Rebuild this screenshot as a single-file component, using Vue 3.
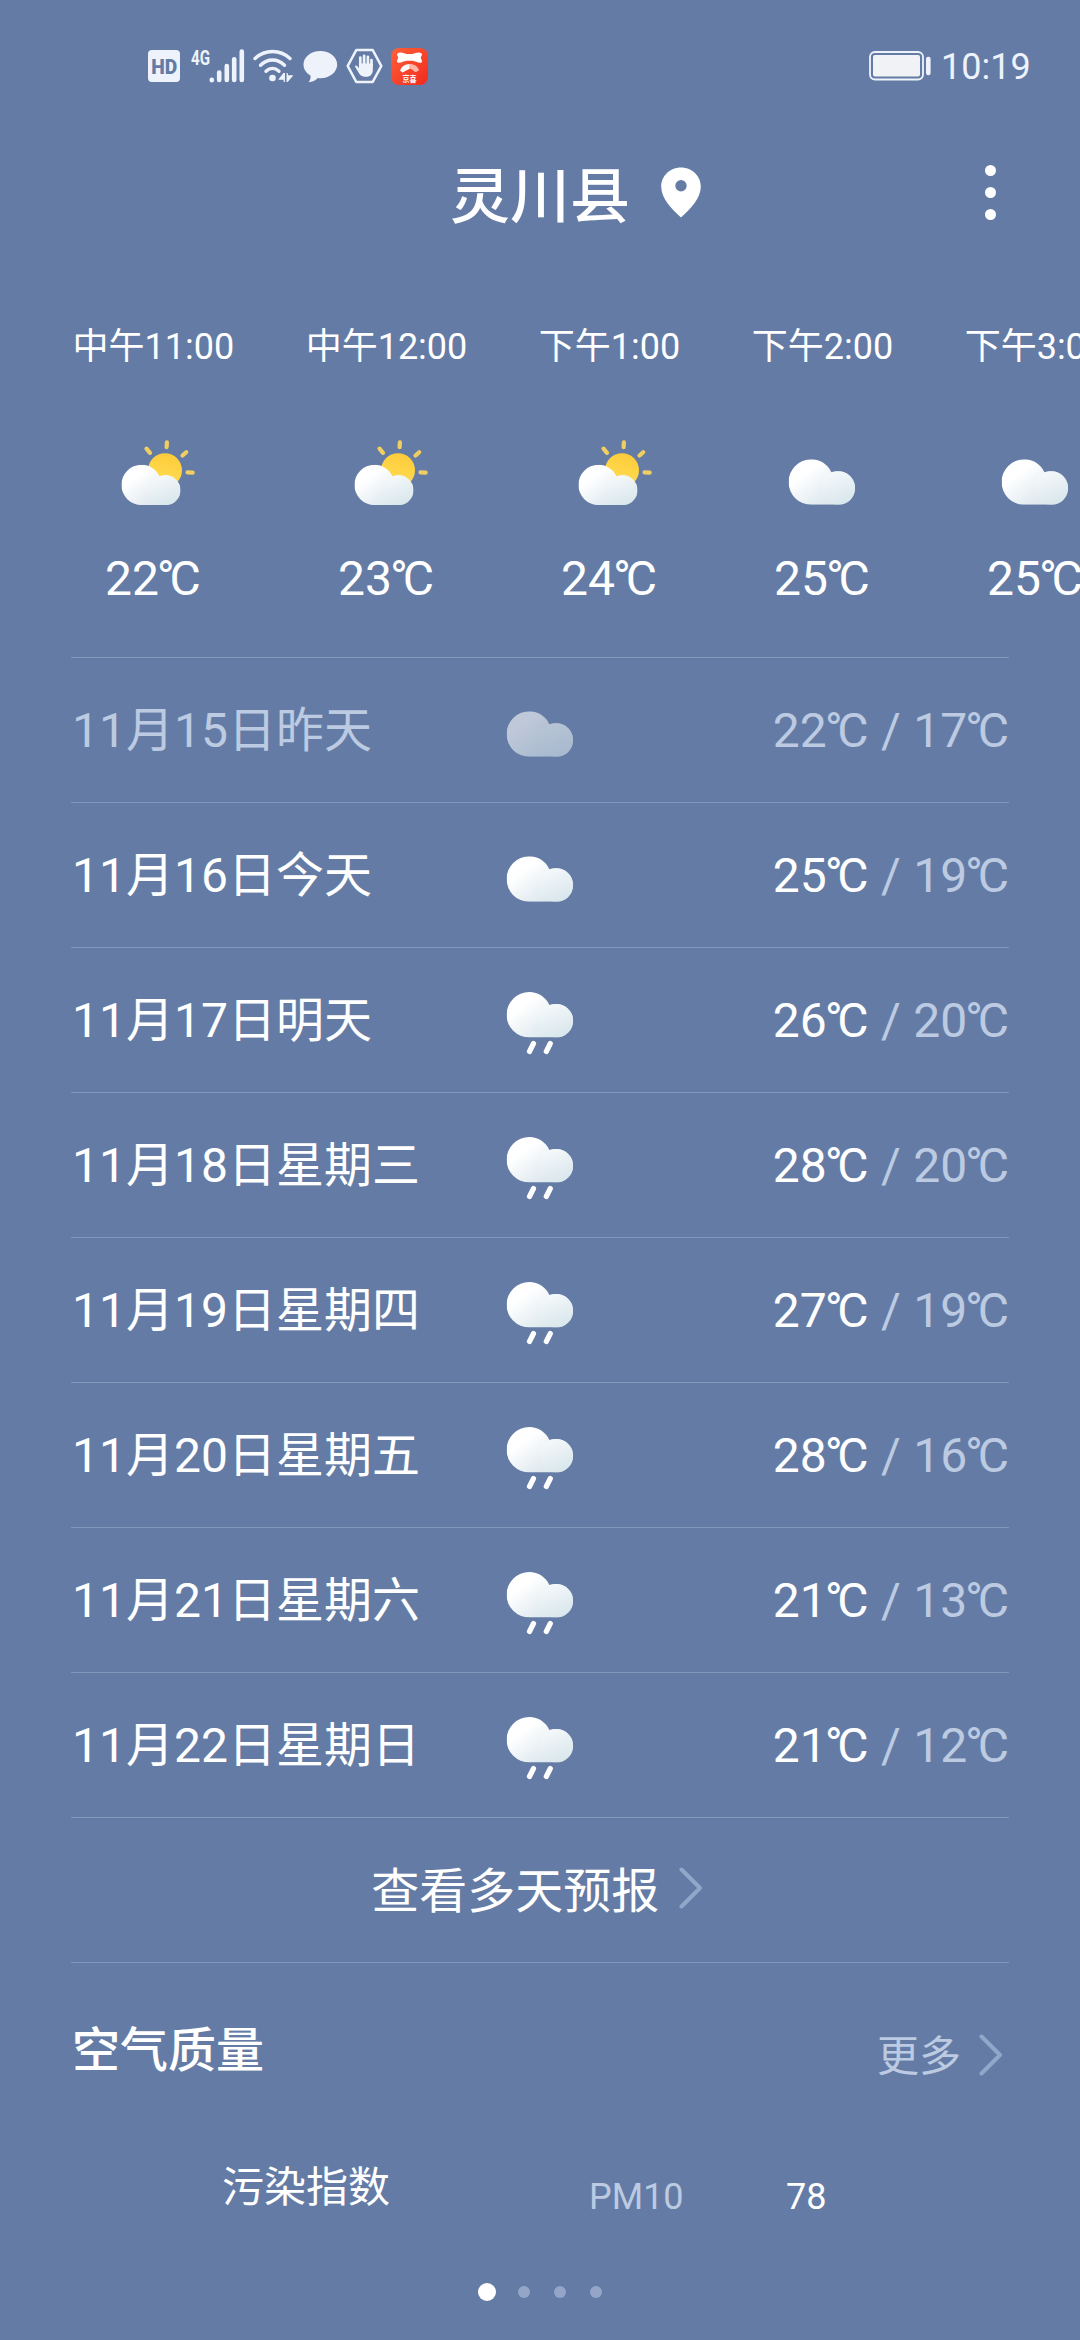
<script setup>
const hours = [
  { time: '中午11:00', icon: 'sun', temp: 22 },
  { time: '中午12:00', icon: 'sun', temp: 23 },
  { time: '下午1:00', icon: 'sun', temp: 24 },
  { time: '下午2:00', icon: 'cloud', temp: 25 },
  { time: '下午3:00', icon: 'cloud', temp: 25 },
]
const days = [
  { date: '11月15日', name: '昨天', icon: 'cloud', high: 22, low: 17, past: true },
  { date: '11月16日', name: '今天', icon: 'cloud', high: 25, low: 19 },
  { date: '11月17日', name: '明天', icon: 'rain', high: 26, low: 20 },
  { date: '11月18日', name: '星期三', icon: 'rain', high: 28, low: 20 },
  { date: '11月19日', name: '星期四', icon: 'rain', high: 27, low: 19 },
  { date: '11月20日', name: '星期五', icon: 'rain', high: 28, low: 16 },
  { date: '11月21日', name: '星期六', icon: 'rain', high: 21, low: 13 },
  { date: '11月22日', name: '星期日', icon: 'rain', high: 21, low: 12 },
]
</script>

<template>
  <div class="screen">
    <!-- shared icon shapes -->
    <svg class="defs" width="0" height="0" aria-hidden="true">
      <defs>
        <linearGradient id="cloudBody" x1="0.05" y1="0.2" x2="0.85" y2="0.95">
          <stop offset="0.2" stop-color="#ffffff" />
          <stop offset="0.65" stop-color="#e6eef2" />
          <stop offset="1" stop-color="#d6e5eb" />
        </linearGradient>
        <linearGradient id="cloudPuff" x1="0.3" y1="0" x2="0.6" y2="1">
          <stop offset="0" stop-color="#f7fafb" />
          <stop offset="1" stop-color="#d9e7ed" />
        </linearGradient>
        <linearGradient id="sunBody" x1="0.6" y1="0" x2="0.3" y2="1">
          <stop offset="0" stop-color="#fecb3a" />
          <stop offset="1" stop-color="#ffdf55" />
        </linearGradient>
        <symbol id="cloudShape" viewBox="0 0 66.5 45.5">
          <path fill="url(#cloudBody)" d="M22.6 0C31.6 0 39 5.100 42.700 12.900C44.600 12.300 47 12 49.700 12A16.750 16.750 0 0 1 49.700 45.500H22.600A22.700 22.700 0 0 1 22.600 0Z" />
          <path fill="url(#cloudPuff)" opacity="0.75" d="M33 28.700A16.700 16.700 0 0 1 49.700 12A16.750 16.750 0 0 1 49.700 45.500C40 45.500 33 40 33 28.700Z" />
        </symbol>
        <symbol id="icon-cloud" viewBox="0 0 96 96">
          <use href="#cloudShape" x="14.700" y="29.300" width="66.500" height="45.500" />
        </symbol>
        <symbol id="icon-rain" viewBox="0 0 96 96">
          <use href="#cloudShape" x="14.700" y="20" width="66.500" height="45.500" />
          <path d="M41.500 71.500L37.500 79.500M58.300 71.500L54.300 79.500" stroke="#fff" stroke-width="5.200" stroke-linecap="round" />
        </symbol>
        <symbol id="icon-sun" viewBox="0 0 96 96">
          <circle cx="60" cy="40.200" r="17" fill="url(#sunBody)" />
          <path d="M61.900 12.300L61.600 17.200M81.200 22.200L77.500 25.500M41.500 18.700L45 22.900M82.500 42.300L87.700 42.600" stroke="#f0ce62" stroke-width="4.200" stroke-linecap="round" />
          <use href="#cloudShape" x="16.500" y="34.700" width="59" height="40.400" />
        </symbol>
      </defs>
    </svg>

    <header class="status">
      <div class="status-left">
        <svg width="32" height="32" viewBox="0 0 32 32">
          <rect width="32" height="32" rx="4" fill="#eef3fb" />
          <text x="3.200" y="23.500" textLength="26" lengthAdjust="spacingAndGlyphs" class="hd">HD</text>
        </svg>
        <svg class="signal" width="54" height="36" viewBox="0 0 54 36">
          <text x="0" y="16.500" textLength="19" lengthAdjust="spacingAndGlyphs" class="net">4G</text>
          <path d="M20.800 32.300V31.800M28.200 32V24.500M35.800 32V18M43.200 32V11.200M50.800 32V3.500" stroke="#eef3fb" stroke-width="4.600" stroke-linecap="round" />
        </svg>
        <svg class="wifi" width="40" height="34" viewBox="0 0 40 34">
          <g fill="none" stroke="#eef3fb" stroke-width="3.400" stroke-linecap="round">
            <path d="M2 9.500C12 .200 27 .200 37 9.500" />
            <path d="M7.500 16.200C14.500 9.300 24.500 9.300 31.500 16.200" />
            <path d="M13 22.300C17 18.600 22 18.600 26 22.300" />
          </g>
          <circle cx="19.500" cy="29" r="3.300" fill="#eef3fb" />
          <path d="M31.300 24V33M31 24.500L26.500 30H31.500M34.200 33V24M34.200 32.500L39 27H34" fill="#eef3fb" stroke="#eef3fb" stroke-width="1.300" />
        </svg>
        <svg class="bubble" width="35" height="33" viewBox="0 0 35 33">
          <path fill="#eef3fb" d="M17.300 1C26.700 1 34.200 7 34.200 14.600C34.200 22.200 26.700 28.300 17.300 28.300C16.400 28.300 15.600 28.200 14.700 28.100C12.500 30.600 9.500 32 5.500 32.300C7 30.600 7.700 28.300 7.600 25.700C3.200 23.200 .500 19.200 .500 14.600C.500 7 8 1 17.300 1Z" />
        </svg>
        <svg class="hex" width="37" height="36" viewBox="0 0 37 36">
          <path d="M10.300 2H26.700L35.300 18L26.700 34H10.300L1.700 18Z" fill="none" stroke="#eef3fb" stroke-width="2.600" stroke-linejoin="round" />
          <path d="M14.300 17V9.500M18.100 17V7.800M21.900 17V8.800M25.500 18V12" stroke="#eef3fb" stroke-width="2.700" stroke-linecap="round" />
          <path fill="#eef3fb" d="M12.950 15.500H26.850V21.500C26.850 26 24.500 28.800 20.200 28.800C15.500 28.800 13.800 27 11.800 23.200L9.200 18.900C8.600 17.600 10.200 16.900 11.200 18.100L12.950 20.200Z" />
        </svg>
        <svg class="app" width="37" height="37" viewBox="0 0 37 37">
          <defs>
            <linearGradient id="appBg" x1="0" y1="0" x2="1" y2="1">
              <stop offset="0" stop-color="#ff6138" />
              <stop offset="1" stop-color="#f02a1e" />
            </linearGradient>
          </defs>
          <rect width="37" height="37" rx="8" fill="url(#appBg)" />
          <path fill="#fff" d="M6.500 5.500C9 3.300 12.500 5 15.500 6H21.500C24.500 5 28 3.300 30.500 5.500C32 7 29.800 8.300 29.800 9.500C29.800 11 32 13 30.500 14.500C27.500 15.600 24.500 13.200 21.500 12.800H15.500C12.500 13.200 9.500 15.600 6.500 14.500C5 13 7.200 11 7.200 9.500C7.200 8.300 5 7 6.500 5.500Z" />
          <path fill="#fff" d="M9 22.500C10.500 18.500 13.800 16.300 18.500 16L20 20L11.500 24.500Z" />
          <path fill="#ffb5a6" d="M18.500 16C23.500 16 27 18.500 28 22.500L24.500 24.200L18 19.500Z" />
          <text x="11.500" y="33.500" class="app-name" textLength="14" lengthAdjust="spacingAndGlyphs">京喜</text>
        </svg>
      </div>
      <div class="status-right">
        <svg width="62" height="30" viewBox="0 0 62 30">
          <rect x="1" y="1" width="53" height="27.500" rx="5" fill="none" stroke="#eef3fb" stroke-width="1.800" />
          <rect x="4" y="4" width="47" height="21.500" rx="2" fill="#f0f2f6" />
          <rect x="57" y="5.800" width="4.600" height="18.500" rx="2.200" fill="#eef3fb" />
        </svg>
        <span class="clock">10:19</span>
      </div>
    </header>

    <div class="title-bar">
      <div class="place">
        <h1>灵川县</h1>
        <svg width="40" height="51" viewBox="0 0 40 51">
          <path fill="#fff" fill-rule="evenodd" d="M20 .500C31 .500 39.800 9 39.800 19.500C39.800 31 30 41.500 20 50.500C10 41.500 .200 31 .200 19.500C.200 9 9 .500 20 .500ZM20 13A5.700 5.700 0 1 0 20 24.400A5.700 5.700 0 1 0 20 13Z" />
        </svg>
      </div>
      <div class="menu"><i></i><i></i><i></i></div>
    </div>

    <section class="hourly">
      <div v-for="h in hours" :key="h.time" class="hour">
        <span class="hour-time">{{ h.time }}</span>
        <svg width="96" height="96"><use :href="'#icon-' + h.icon" width="96" height="96" /></svg>
        <span class="hour-temp">{{ h.temp }}<span class="unit"><span class="deg">°</span>C</span></span>
      </div>
    </section>

    <section class="daily">
      <div v-for="d in days" :key="d.date" class="day" :class="{ past: d.past }">
        <span class="day-name">{{ d.date }}{{ d.name }}</span>
        <svg width="96" height="96"><use :href="'#icon-' + d.icon" width="96" height="96" /></svg>
        <span class="day-temp"><b>{{ d.high }}<span class="unit"><span class="deg">°</span>C</span></b> / {{ d.low }}<span class="unit"><span class="deg">°</span>C</span></span>
      </div>
      <div class="more-days">
        <span>查看多天预报</span>
        <svg class="chevron" width="24" height="42" viewBox="0 0 24 42"><path d="M2.500 2.500L21 21L2.500 39.500" /></svg>
      </div>
    </section>

    <section class="air">
      <div class="air-head">
        <h2>空气质量</h2>
        <div class="air-more">
          <span>更多</span>
          <svg class="chevron" width="24" height="42" viewBox="0 0 24 42"><path d="M2.500 2.500L21 21L2.500 39.500" /></svg>
        </div>
      </div>
      <div class="air-body">
        <span class="air-index">污染指数</span>
        <span class="air-key">PM10</span>
        <span class="air-value">78</span>
      </div>
    </section>

    <nav class="pager"><i class="on"></i><i></i><i></i><i></i></nav>
  </div>
</template>

<style>
body {
  background: #647ca5;
}
</style>

<style scoped>
.screen {
  width: 1080px;
  height: 2340px;
  overflow: hidden;
  display: flex;
  flex-direction: column;
  box-sizing: border-box;
  background: #647ca5;
  color: #fff;
  font-family: Roboto, "Noto Sans CJK SC", sans-serif;
}
.screen svg {
  display: block;
  flex: none;
}
.screen .defs {
  position: absolute;
}
.status {
  display: flex;
  justify-content: space-between;
  align-items: center;
  height: 132px;
  flex: none;
  padding: 0 49px 0 147.5px;
}
.status-left,
.status-right {
  display: flex;
  align-items: center;
}
.hd {
  font: 900 21px Roboto, sans-serif;
  fill: #647ca5;
}
.net {
  font: 700 19.5px Roboto, sans-serif;
  fill: #eef3fb;
}
.app-name {
  font: 700 8px "Noto Sans CJK SC", sans-serif;
  fill: #fff;
}
.signal {
  margin-left: 11.5px;
}
.wifi {
  margin-left: 8px;
}
.bubble {
  margin-left: 10px;
}
.hex {
  margin-left: 8px;
}
.app {
  margin-left: 8px;
}
.clock {
  width: 90px;
  margin-left: 10px;
  padding-top: 2px;
  font-size: 36px;
  line-height: 44px;
  color: #eef3fb;
}
.title-bar {
  display: grid;
  grid-template-columns: 1fr 42px;
  align-items: center;
  height: 120px;
  flex: none;
  padding: 0 69px 0 450px;
}
.place {
  display: flex;
  align-items: center;
  gap: 31px;
}
h1 {
  margin: 0;
  padding-top: 11px;
  font-size: 60px;
  line-height: 80px;
  font-weight: 500;
}
.menu {
  display: flex;
  flex-direction: column;
  align-items: center;
  gap: 11px;
}
.menu i {
  width: 11px;
  height: 11px;
  border-radius: 50%;
  background: #fff;
}
.hourly {
  display: flex;
  gap: 71.500px;
  height: 405px;
  flex: none;
  padding: 73px 0 0 72.500px;
  box-sizing: border-box;
}
.hour {
  display: flex;
  flex-direction: column;
  align-items: center;
  flex: none;
}
.hour-time {
  font-size: 36px;
  line-height: 44px;
  margin-bottom: 61px;
}
.hour-temp {
  font-size: 48px;
  line-height: 60px;
  margin-top: 23px;
  padding-right: 1px;
}
.unit {
  margin-left: -2px;
}
.deg {
  letter-spacing: -5.3px;
}
.daily {
  margin: 0 71px;
  border-top: 1px solid #8297ba;
}
.day,
.more-days {
  height: 145px;
  box-sizing: border-box;
  border-bottom: 1px solid #8297ba;
  align-items: center;
  font-size: 48px;
  line-height: 60px;
}
.day {
  display: grid;
  grid-template-columns: 1fr 96px 1fr;
}
.day-name {
  padding: 2px 0 0 1px;
}
.day-temp {
  padding: 2px 0 0;
  text-align: right;
  word-spacing: 0.5px;
  color: #bccae2;
}
.day-temp b {
  font-weight: 400;
  color: #fff;
}
.past .day-name,
.past .day-temp b {
  color: #bccae2;
}
.past svg {
  opacity: 0.58;
}
.more-days {
  display: flex;
  justify-content: center;
  gap: 19.500px;
  padding-right: 6px;
}
.more-days span {
  padding-top: 3px;
}
.more-days .chevron {
  margin-bottom: 4px;
}
.chevron path {
  fill: none;
  stroke: #8fa7c9;
  stroke-width: 4;
  stroke-linecap: round;
  stroke-linejoin: round;
}
.air {
  padding: 0 77px 0 72px;
}
.air-head {
  display: flex;
  justify-content: space-between;
  align-items: flex-start;
  height: 122px;
  padding-top: 58px;
  box-sizing: border-box;
}
h2 {
  margin: 0;
  font-size: 48px;
  line-height: 60px;
  font-weight: 500;
}
.air-more {
  display: flex;
  align-items: center;
  gap: 18px;
  margin-top: 6px;
  font-size: 42px;
  line-height: 60px;
  color: #bccae2;
}
.air-more .chevron {
  margin-bottom: 5px;
}
.air-body {
  display: grid;
  grid-template-columns: 367px 197px 1fr;
  align-items: center;
  padding-left: 150px;
  margin-top: 72px;
}
.air-index {
  font-size: 42px;
  line-height: 60px;
}
.air-key,
.air-value {
  font-size: 36px;
  line-height: 44px;
  padding-top: 18px;
}
.air-key {
  color: #bccae2;
}
.pager {
  display: flex;
  justify-content: flex-start;
  align-items: center;
  gap: 24px;
  height: 96px;
  margin-top: auto;
  padding-left: 478px;
}
.pager i {
  width: 12px;
  height: 12px;
  border-radius: 50%;
  background: #95a5c8;
}
.pager .on {
  width: 18px;
  height: 18px;
  margin-right: -2px;
  background: #fff;
}
</style>
